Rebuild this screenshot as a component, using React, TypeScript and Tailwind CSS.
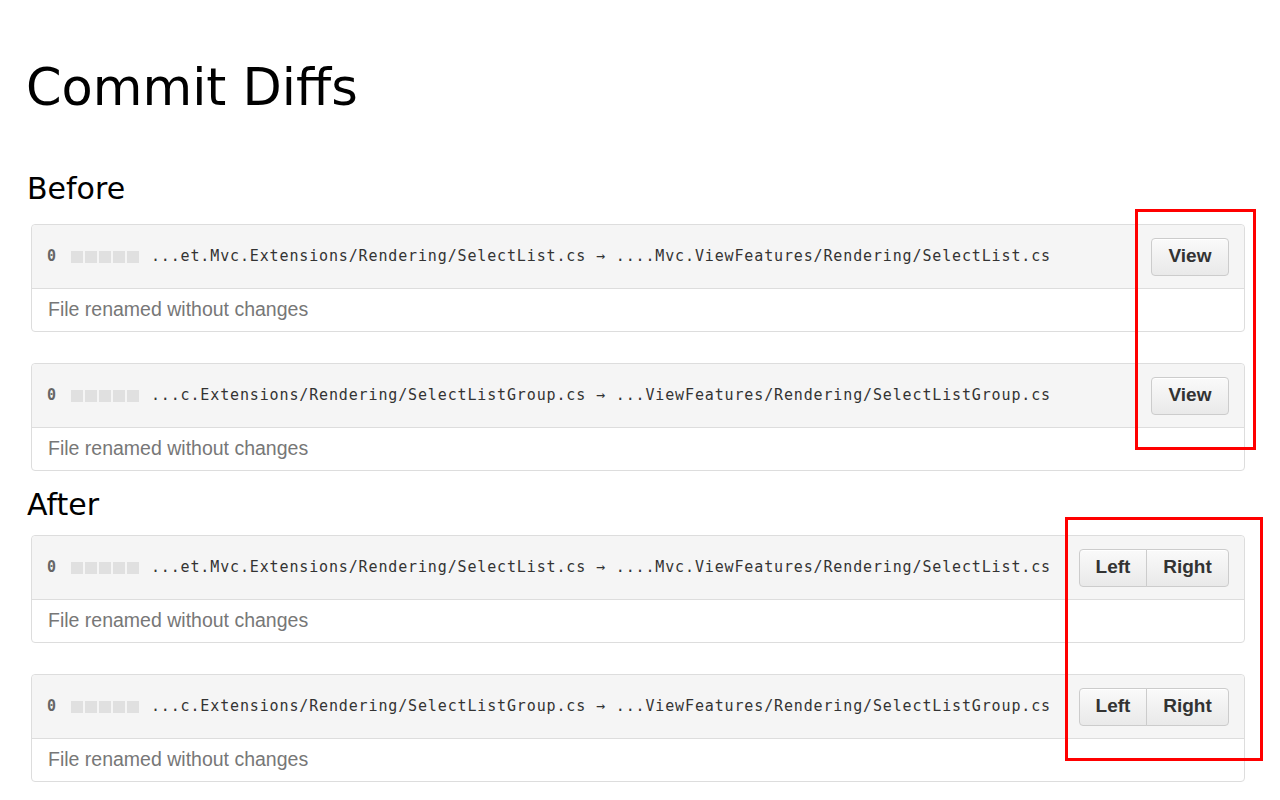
const diffs = [
  {
    path: "...et.Mvc.Extensions/Rendering/SelectList.cs → ....Mvc.ViewFeatures/Rendering/SelectList.cs",
  },
  {
    path: "...c.Extensions/Rendering/SelectListGroup.cs → ...ViewFeatures/Rendering/SelectListGroup.cs",
  },
];

const btn =
  "h-[38px] border border-[#ccc] bg-gradient-to-b from-[#fafafa] to-[#e9e9e9] font-['Liberation_Sans',Arial,sans-serif] text-[19px] font-bold text-[#333] shadow-[inset_0_1px_0_#fff]";

const DiffCard = ({ path, mode }: { path: string; mode: "view" | "split" }) => (
  <div className="ml-[4px] rounded-[4px] border border-[#ddd] bg-white">
    <div className="flex h-[64px] items-center justify-between rounded-t-[4px] border-b border-[#ddd] bg-[#f5f5f5] pl-[15px] pr-[15px]">
      <div className="flex items-center font-['DejaVu_Sans_Mono',monospace] text-[15px] tracking-[0.86px] text-[#333]">
        <span className="font-bold text-[#666]">0</span>
        <span className="ml-[14px] mr-[12px] flex gap-[2px]">
          {[0, 1, 2, 3, 4].map((i) => (
            <span key={i} className="h-[12px] w-[12px] bg-[#e0e0e0]" />
          ))}
        </span>
        <span>{path}</span>
      </div>
      {mode === "view" ? (
        <button className={`${btn} w-[78px] rounded-[4px]`}>View</button>
      ) : (
        <div className="flex">
          <button className={`${btn} w-[68px] rounded-l-[4px]`}>Left</button>
          <button className={`${btn} -ml-px w-[83px] rounded-r-[4px]`}>Right</button>
        </div>
      )}
    </div>
    <div className="flex h-[42px] items-center pl-[16px] font-['Liberation_Sans',Arial,sans-serif] text-[19.5px] text-[#777]">
      File renamed without changes
    </div>
  </div>
);

export default function App() {
  return (
    <div className="relative min-h-[800px] bg-white pl-[27px] pr-[35px] pt-[58px] font-['DejaVu_Sans',sans-serif] text-black">
      <h1 className="-ml-[1px] text-[51px] leading-[60px]">Commit Diffs</h1>

      <h2 className="mt-[53px] text-[30px] leading-[36px]">Before</h2>
      <div className="mt-[17px] flex flex-col gap-[31px]">
        {diffs.map((d, i) => (
          <DiffCard key={i} path={d.path} mode="view" />
        ))}
      </div>

      <h2 className="mt-[16px] text-[30px] leading-[36px]">After</h2>
      <div className="mt-[12px] flex flex-col gap-[31px]">
        {diffs.map((d, i) => (
          <DiffCard key={i} path={d.path} mode="split" />
        ))}
      </div>

      <div className="pointer-events-none absolute left-[1135px] top-[209px] h-[241px] w-[121px] border-[3px] border-[#ff0000]" />
      <div className="pointer-events-none absolute left-[1065px] top-[517px] h-[244px] w-[198px] border-[3px] border-[#ff0000]" />
    </div>
  );
}
